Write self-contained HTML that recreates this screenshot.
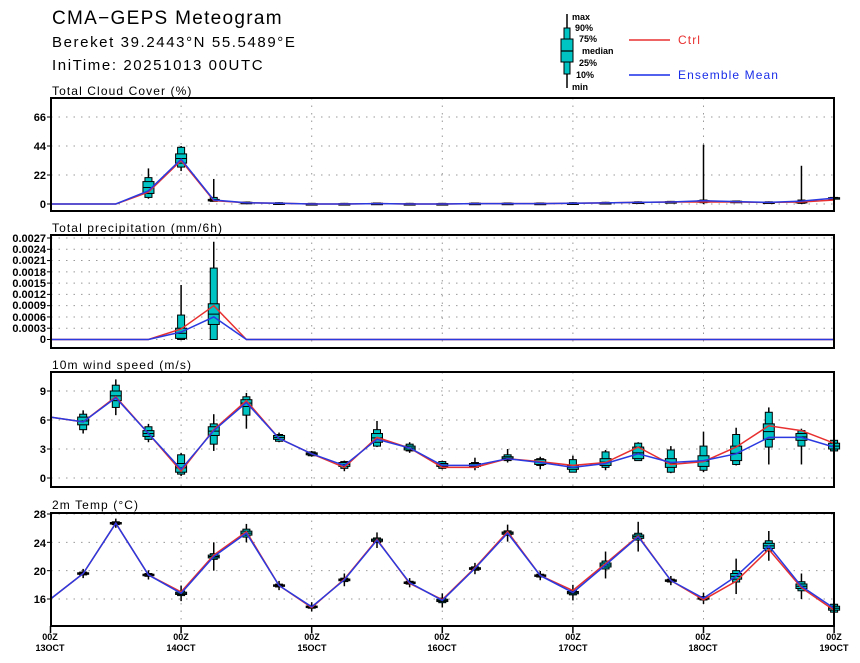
<!DOCTYPE html>
<html><head><meta charset="utf-8"><style>
html,body{margin:0;padding:0;background:#fff;}
svg{display:block;font-family:"Liberation Sans",sans-serif;}
.t{font-size:19px;letter-spacing:1.3px;}
.s{font-size:15px;letter-spacing:1.6px;}
.p{font-size:12px;letter-spacing:1.1px;}
.y{font-size:11px;font-weight:bold;}
.l{font-size:9px;font-weight:bold;}
</style></head><body>
<svg id="s" width="860" height="663" viewBox="0 0 860 663" xmlns="http://www.w3.org/2000/svg">
<text x="52" y="24" class="t">CMA−GEPS Meteogram</text>
<text x="52" y="47" class="s">Bereket 39.2443°N 55.5489°E</text>
<text x="52" y="70" class="s">IniTime: 20251013 00UTC</text>
<line x1="567" y1="14" x2="567" y2="88" stroke="#000" stroke-width="1.5"/>
<rect x="564" y="28" width="6" height="46" fill="#00c4c4" stroke="#000"/>
<rect x="561" y="39" width="12" height="23" fill="#00c4c4" stroke="#000"/>
<line x1="561" y1="51" x2="573" y2="51" stroke="#000" stroke-width="1.2"/>
<text x="572" y="20" class="l">max</text>
<text x="575" y="31" class="l">90%</text>
<text x="579" y="42" class="l">75%</text>
<text x="582" y="54" class="l">median</text>
<text x="579" y="66" class="l">25%</text>
<text x="576" y="78" class="l">10%</text>
<text x="572" y="90" class="l">min</text>
<line x1="629" y1="40" x2="670" y2="40" stroke="#e83030" stroke-width="1.5"/>
<text x="678" y="44" class="p" fill="#e83030">Ctrl</text>
<line x1="629" y1="75" x2="670" y2="75" stroke="#1a2ee8" stroke-width="1.5"/>
<text x="678" y="79" class="p" fill="#1a2ee8">Ensemble Mean</text>
<text x="52" y="95" class="p">Total Cloud Cover (%)</text>
<text x="52" y="232" class="p">Total precipitation (mm/6h)</text>
<text x="52" y="369" class="p">10m wind speed (m/s)</text>
<text x="52" y="509" class="p">2m Temp (°C)</text>
<g class="y" text-anchor="end">
<text x="46" y="121">66</text><text x="46" y="150">44</text><text x="46" y="179">22</text><text x="46" y="208">0</text>
<text x="46" y="242">0.0027</text><text x="46" y="253">0.0024</text><text x="46" y="264">0.0021</text><text x="46" y="276">0.0018</text><text x="46" y="287">0.0015</text><text x="46" y="298">0.0012</text><text x="46" y="309">0.0009</text><text x="46" y="321">0.0006</text><text x="46" y="332">0.0003</text><text x="46" y="343">0</text>
<text x="46" y="395">9</text><text x="46" y="424">6</text><text x="46" y="453">3</text><text x="46" y="482">0</text>
<text x="46" y="518">28</text><text x="46" y="547">24</text><text x="46" y="575">20</text><text x="46" y="603">16</text>
</g>
<g class="l" text-anchor="middle">
<text x="50" y="640">00Z</text><text x="50" y="651">13OCT</text>
<text x="181" y="640">00Z</text><text x="181" y="651">14OCT</text>
<text x="312" y="640">00Z</text><text x="312" y="651">15OCT</text>
<text x="442" y="640">00Z</text><text x="442" y="651">16OCT</text>
<text x="573" y="640">00Z</text><text x="573" y="651">17OCT</text>
<text x="703" y="640">00Z</text><text x="703" y="651">18OCT</text>
<text x="834" y="640">00Z</text><text x="834" y="651">19OCT</text>
</g>
<g id="g"></g>
</svg>
<script>
var NS="http://www.w3.org/2000/svg",g=document.getElementById('g');
function el(n,a){var e=document.createElementNS(NS,n);for(var k in a)e.setAttribute(k,a[k]);g.appendChild(e);return e;}
function X(i){return 50.5+32.65*i;}
var L=51,R=834;
var P=[
 {top:98,bot:211,y0:204,k:87/66,ticks:[0,22,44,66],
  m:[0,0,0,10,34,3,1,0.5,0,0,0.3,0,0,0.3,0.3,0.3,0.5,0.8,1.2,1.5,2.5,1.8,1.2,2.2,4.5],
  c:[0,0,0,9,33,2.5,1,0.5,0,0,0.3,0,0,0.3,0.3,0.3,0.5,0.8,1.2,1.5,1.5,1.5,1.2,1.5,3],
  b:{3:[5,8,17,20,4,27],4:[28,31,38,43,25,44],5:[2,2.5,3.5,5,2,19],20:[1,1.5,2.5,3,0,45],23:[0.5,1,2,3,0,29]}},
 {top:235,bot:348,y0:339.5,k:101.5/0.0027,ticks:[0,0.0003,0.0006,0.0009,0.0012,0.0015,0.0018,0.0021,0.0024,0.0027],
  m:[0,0,0,0,0.0002,0.0006,0,0,0,0,0,0,0,0,0,0,0,0,0,0,0,0,0,0,0],
  c:[0,0,0,0,0.00028,0.0009,0,0,0,0,0,0,0,0,0,0,0,0,0,0,0,0,0,0,0],
  b:{4:[0,0.00003,0.0003,0.00065,0,0.00145],5:[0,0.0004,0.00095,0.0019,0,0.0026]}},
 {top:372,bot:487,y0:478,k:87/9,ticks:[0,3,6,9],
  m:[6.3,5.8,8.3,4.6,0.9,4.9,7.8,4.1,2.5,1.3,4.0,3.1,1.3,1.3,2.0,1.6,1.1,1.5,2.5,1.6,1.8,2.5,4.2,4.2,3.2],
  c:[6.3,5.8,8.4,4.6,0.7,5.0,8.0,4.1,2.5,1.1,4.2,3.1,1.1,1.1,2.0,1.7,1.3,1.6,3.2,1.4,1.7,3.2,5.4,4.9,3.6],
  b:{1:[5,5.5,6.3,6.6,4.6,7],2:[7.3,8.0,9.0,9.6,6.5,10.2],3:[4,4.3,4.9,5.3,3.7,5.6],4:[0.4,0.6,1.5,2.4,0.2,2.6],5:[3.5,4.4,5.3,5.6,2.8,6.6],6:[6.5,7.4,8.1,8.4,5.1,8.8],7:[3.8,4.0,4.4,4.5,3.7,4.7],8:[2.3,2.4,2.6,2.7,2.2,2.8],9:[1.0,1.2,1.6,1.7,0.7,1.8],10:[3.3,3.7,4.6,5.0,3.2,5.9],11:[2.8,2.9,3.3,3.5,2.6,3.7],12:[1.0,1.2,1.5,1.7,0.9,1.8],13:[1.1,1.2,1.5,1.6,0.8,2.1],14:[1.8,1.9,2.2,2.4,1.6,3.0],15:[1.3,1.4,1.9,2.0,0.9,2.2],16:[0.6,0.9,1.3,1.9,0.6,2.3],17:[1.1,1.3,2.0,2.7,0.8,2.9],18:[1.8,2.0,3.2,3.6,1.8,3.7],19:[0.6,1.1,2.0,2.9,0.5,3.3],20:[0.8,1.2,2.3,3.3,0.6,4.8],21:[1.4,1.8,3.3,4.5,1.3,5.2],22:[3.2,4.0,5.6,6.8,1.4,7.3],23:[3.3,3.9,4.6,4.9,1.4,5.1],24:[2.8,3.0,3.6,3.9,2.5,4.2]}},
 {top:513,bot:626,y0:599,k:85/12,ticks:[16,20,24,28],base:16,
  m:[16,19.6,26.7,19.4,16.8,22,25.3,17.9,14.9,18.7,24.3,18.3,15.8,20.3,25.3,19.3,16.9,20.8,24.8,18.6,16.1,19.2,23.5,17.8,14.7],
  c:[16,19.6,26.7,19.4,17.0,22.2,25.5,17.9,14.8,18.8,24.4,18.2,15.9,20.4,25.5,19.3,17.2,21.0,24.9,18.6,15.9,18.5,23.0,17.6,14.4]}
];
var tsp={5:[0.5,1.5],6:[0.7,0.6],10:[0.4,0.7],13:[0.3,0.5],14:[0.4,0.8],17:[0.7,1.2],18:[0.6,1.5],21:[1.0,1.5],22:[0.9,1.2],23:[0.8,1.0],24:[0.7,0.8],9:[0.3,0.6],4:[0.4,0.7],12:[0.4,0.6],16:[0.4,0.7],20:[0.3,0.5]};
P.forEach(function(p,pi){
 var base=p.base||0;function Y(v){return p.y0-(v-base)*p.k;}
 p.ticks.forEach(function(t){var y=Y(t);el('line',{x1:L,x2:R,y1:y,y2:y,stroke:'#999','stroke-dasharray':'1.5 6','stroke-width':1});
  el('line',{x1:L-4,x2:L,y1:y,y2:y,stroke:'#000'});});
 for(var d=1;d<6;d++){var x=50.5+130.6*d;el('line',{x1:x,x2:x,y1:p.top,y2:p.bot,stroke:'#999','stroke-dasharray':'1.5 6'});}
 for(var i=1;i<25;i++){
  var b=p.b?p.b[i]:null,m=p.m[i];
  if(!b&&pi==3){var s=tsp[i]||[0.25,0.4];var a=s[0],w=s[1];b=[m-a*0.8,m-a*0.4,m+a*0.4,m+a*0.8,m-w-a,m+w+a];}
  if(!b&&pi==0&&i>5){b=[m-0.5,m-0.3,m+0.3,m+0.5,m-0.5,m+0.8];}
  if(!b)continue;var x=X(i);
  el('line',{x1:x,x2:x,y1:Y(b[4]),y2:Y(b[5]),stroke:'#000','stroke-width':1.5});
  el('rect',{x:x-3.5,y:Y(b[3]),width:7,height:Math.max(1.5,Y(b[0])-Y(b[3])),fill:'#00c4c4',stroke:'#000','stroke-width':1});
  el('rect',{x:x-5.5,y:Y(b[2]),width:11,height:Math.max(1.5,Y(b[1])-Y(b[2])),fill:'#00c4c4',stroke:'#000','stroke-width':1});
  var md=(b[1]+b[2])/2;el('line',{x1:x-5.5,x2:x+5.5,y1:Y(md),y2:Y(md),stroke:'#000','stroke-width':1});
 }
 function pl(arr,col){var s=arr.map(function(v,i){return X(i).toFixed(1)+','+Y(v).toFixed(1);}).join(' ');
  el('polyline',{points:s,fill:'none',stroke:col,'stroke-width':1.5});}
 pl(p.c,'#e83030');pl(p.m,'#2a3ae0');
 el('rect',{x:L,y:p.top,width:R-L,height:p.bot-p.top,fill:'none',stroke:'#000','stroke-width':2});
});
for(var d=0;d<7;d++){var x=50.5+130.6*d;el('line',{x1:x,x2:x,y1:626,y2:633,stroke:'#000','stroke-width':1.5});}
</script>
</body></html>
